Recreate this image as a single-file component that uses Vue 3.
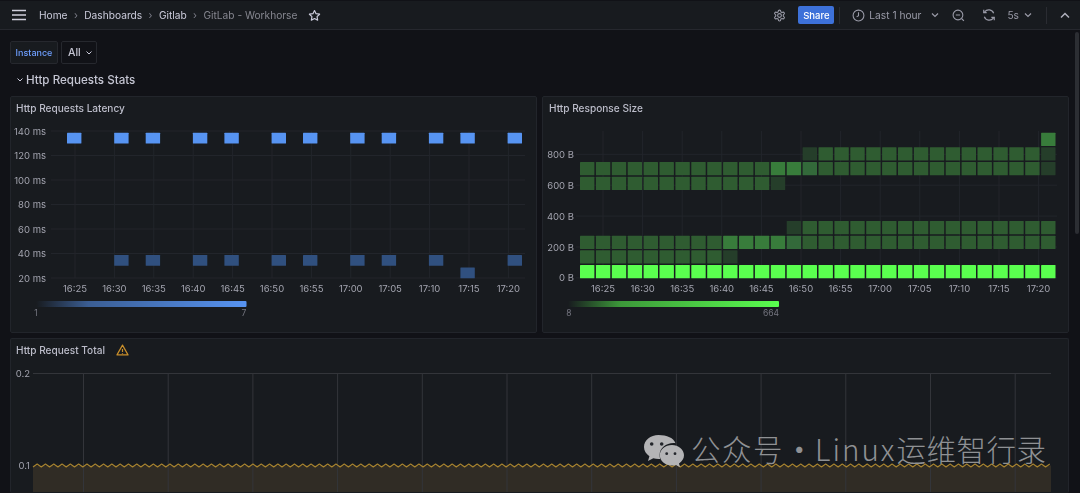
<template>
  <div class="page">
    <header class="topbar">
      <svg class="menu" width="16" height="12" viewBox="0 0 16 12"><path d="M1 1.5h14M1 6h14M1 10.500h14" stroke="#d0d0dc" stroke-width="1.500" fill="none" /></svg>
      <nav class="crumbs">
        <span>Home</span><i>›</i><span>Dashboards</span><i>›</i><span>Gitlab</span><i>›</i><span class="current">GitLab - Workhorse</span>
      </nav>
      <svg class="star" width="13" height="13" viewBox="0 0 24 24"><path d="M12 2.800l2.900 5.900 6.500.9-4.700 4.600 1.100 6.500-5.800-3.100-5.800 3.100 1.100-6.500-4.700-4.600 6.500-.9z" fill="none" stroke="#ccccdc" stroke-width="2.200" stroke-linejoin="round" /></svg>
      <div class="spacer"></div>
      <svg width="13" height="13" viewBox="0 0 24 24" fill="none" stroke="#9a9ba8" stroke-width="2"><path d="M12.220 2h-.44a2 2 0 0 0-2 2v.18a2 2 0 0 1-1 1.730l-.43.25a2 2 0 0 1-2 0l-.15-.08a2 2 0 0 0-2.730.73l-.22.38a2 2 0 0 0 .73 2.730l.15.1a2 2 0 0 1 1 1.720v.51a2 2 0 0 1-1 1.740l-.15.09a2 2 0 0 0-.73 2.730l.22.38a2 2 0 0 0 2.730.73l.15-.08a2 2 0 0 1 2 0l.43.25a2 2 0 0 1 1 1.730V20a2 2 0 0 0 2 2h.44a2 2 0 0 0 2-2v-.18a2 2 0 0 1 1-1.730l.43-.25a2 2 0 0 1 2 0l.15.08a2 2 0 0 0 2.730-.73l.22-.39a2 2 0 0 0-.73-2.730l-.15-.08a2 2 0 0 1-1-1.740v-.5a2 2 0 0 1 1-1.740l.15-.09a2 2 0 0 0 .73-2.730l-.22-.38a2 2 0 0 0-2.730-.73l-.15.08a2 2 0 0 1-2 0l-.43-.25a2 2 0 0 1-1-1.730V4a2 2 0 0 0-2-2z" /><circle cx="12" cy="12" r="3.500" /></svg>
      <button class="share">Share</button>
      <span class="divider"></span>
      <svg class="clock" width="13" height="13" viewBox="0 0 24 24" fill="none" stroke="#9a9ba8" stroke-width="2"><circle cx="12" cy="12" r="10" /><path d="M12 6v6.500l-3.500 2" /></svg>
      <span class="muted range">Last 1 hour</span>
      <svg class="chev first" width="8" height="6" viewBox="0 0 8 6"><path d="M1 1.500l3 3 3-3" fill="none" stroke="#9a9ba8" stroke-width="1.200" /></svg>
      <svg class="zoomout" width="13" height="13" viewBox="0 0 24 24" fill="none" stroke="#9a9ba8" stroke-width="2"><circle cx="11" cy="11" r="9" /><path d="M7 11h8M18 18l4 4" /></svg>
      <svg class="refresh" width="14" height="14" viewBox="0 0 24 24" fill="none" stroke="#9a9ba8" stroke-width="2"><path d="M20 9a9 9 0 0 0-15.500-2.500L3 8M4 15a9 9 0 0 0 15.500 2.500L21 16" /><path d="M3 3v5h5M21 21v-5h-5" /></svg>
      <span class="muted interval">5s</span>
      <svg class="chev" width="8" height="6" viewBox="0 0 8 6"><path d="M1 1.500l3 3 3-3" fill="none" stroke="#9a9ba8" stroke-width="1.200" /></svg>
      <span class="divider second"></span>
      <svg class="up" width="10" height="7" viewBox="0 0 10 7"><path d="M1 5.500l4-4 4 4" fill="none" stroke="#b0b1bd" stroke-width="1.500" /></svg>
    </header>

    <main class="content">
      <div class="vars">
        <label class="var-label">Instance</label>
        <div class="var-value">All
          <svg width="8" height="6" viewBox="0 0 8 6"><path d="M1.500 1.500l2.500 2.500 2.500-2.500" fill="none" stroke="#ccccdc" stroke-width="1" /></svg>
        </div>
      </div>

      <div class="row-title">
        <svg width="8" height="6" viewBox="0 0 8 6"><path d="M1.500 1.500l2.500 2.500 2.500-2.500" fill="none" stroke="#ccccdc" stroke-width="1" /></svg>
        <span>Http Requests Stats</span>
      </div>

      <div class="panels">
        <section class="panel">
          <h3>Http Requests Latency</h3>
          <svg class="chart" viewBox="11 120 525 212" width="525" height="212">
            <defs>
              <linearGradient id="blueLegend"><stop offset="0" stop-color="#5794f2" stop-opacity="0" /><stop offset="0.25" stop-color="#5794f2" stop-opacity="0.55" /><stop offset="1" stop-color="#5794f2" /></linearGradient>
            </defs>
            <g class="grid">
              <line v-for="t in latencyY" :key="t.label" x1="51" x2="525" :y1="t.y" :y2="t.y" />
              <line v-for="t in latencyX" :key="t.label" :x1="t.x" :x2="t.x" y1="131" y2="278" />
            </g>
            <rect v-for="(c, i) in latencyCells" :key="i" :x="c.x" :y="c.y" width="14.400" height="10.800" rx="0.500" :fill="c.fill" />
            <text v-for="t in latencyY" :key="t.label" class="tick" x="46" :y="t.y + 3.500" text-anchor="end">{{ t.label }}</text>
            <text v-for="t in latencyX" :key="t.label" class="tick" :x="t.x" y="292" text-anchor="middle">{{ t.label }}</text>
            <rect x="36" y="301" width="210.500" height="6" rx="1" fill="url(#blueLegend)" />
            <text class="legend" x="36" y="316" text-anchor="middle">1</text>
            <text class="legend" x="244" y="316" text-anchor="middle">7</text>
          </svg>
        </section>

        <section class="panel">
          <h3 class="right-title">Http Response Size</h3>
          <svg class="chart" viewBox="543 120 525 212" width="525" height="212">
            <defs>
              <linearGradient id="greenLegend"><stop offset="0" stop-color="#5aff4f" stop-opacity="0" /><stop offset="0.25" stop-color="#5aff4f" stop-opacity="0.55" /><stop offset="1" stop-color="#5aff4f" /></linearGradient>
            </defs>
            <g class="grid">
              <line v-for="t in sizeY" :key="t.label" x1="576" x2="1057" :y1="t.y" :y2="t.y" />
              <line v-for="t in sizeX" :key="t.label" :x1="t.x" :x2="t.x" y1="131" y2="278" />
            </g>
            <rect v-for="(c, i) in sizeCells" :key="i" :x="c.x" :y="c.y" width="14.400" height="13.300" rx="0.500" :fill="c.fill" />
            <text v-for="t in sizeY" :key="t.label" class="tick" x="574" :y="t.y + 3.500" text-anchor="end">{{ t.label }}</text>
            <text v-for="t in sizeX" :key="t.label" class="tick" :x="t.x" y="292" text-anchor="middle">{{ t.label }}</text>
            <rect x="568" y="301" width="211" height="6" rx="1" fill="url(#greenLegend)" />
            <text class="legend" x="569" y="316" text-anchor="middle">8</text>
            <text class="legend" x="771" y="316" text-anchor="middle">664</text>
          </svg>
        </section>
      </div>

      <section class="panel total">
        <h3>Http Request Total
          <svg width="13" height="12" viewBox="0 0 24 22" fill="none" stroke="#c98f2b" stroke-width="2.200"><path d="M12 2L1.800 20h20.400z" stroke-linejoin="round" /><path d="M12 9v5.500M12 16.500v1.500" /></svg>
        </h3>
        <svg class="chart" viewBox="11 363 1057 130" width="1057" height="130">
          <rect x="33" y="466.500" width="1018" height="27" fill="#302c25" />
          <g class="grid strong">
            <line x1="33" x2="1051" y1="374.500" y2="374.500" />
            <line v-for="x in totalX" :key="x" :x1="x" :x2="x" y1="374.500" y2="493" />
          </g>
          <path :d="wavePath" fill="none" stroke="#a8842f" stroke-width="1.100" stroke-linejoin="round" />
          <text class="tick" x="30" y="378" text-anchor="end">0.2</text>
          <text class="tick" x="30" y="470" text-anchor="end">0.1</text>
        </svg>
      </section>
    </main>

    <div class="watermark">
      <svg width="42" height="34" viewBox="0 0 42 34">
        <path d="M15.500 1C7.500 1 1 6.300 1 13c0 3.800 2.100 7 5.400 9.200L5 27l5.300-2.800c1.700.5 3.400.8 5.200.8.600 0 1.100 0 1.700-.1-.4-1.200-.6-2.500-.6-3.800 0-6.800 6.200-12 14-12 .7 0 1.300 0 1.900.1C30.900 4.100 23.800 1 15.500 1z" fill="#b4b4b6" />
        <path d="M41 21.300c0-5.700-5.700-10.300-12-10.300-6.800 0-12.200 4.600-12.200 10.300S22.200 31.600 29 31.600c1.400 0 2.800-.2 4.100-.6l3.900 2.200-1-3.700c3-2.100 5-4.900 5-8.200z" fill="#b4b4b6" />
        <circle cx="8.700" cy="10" r="1.800" fill="#23262b" /><circle cx="18.700" cy="10" r="1.800" fill="#23262b" />
        <circle cx="23.700" cy="19.700" r="1.400" fill="#23262b" /><circle cx="32" cy="19.700" r="1.400" fill="#23262b" />
      </svg>
      <span class="mark-text"><span class="mark-name">公众号</span><b class="dot">·</b><span class="mark-latin">Linux</span>运维智行录</span>
    </div>
    <div class="scrollbar"></div>
  </div>
</template>

<script setup>
const times = ['16:25', '16:30', '16:35', '16:40', '16:45', '16:50', '16:55', '17:00', '17:05', '17:10', '17:15', '17:20']

const latencyY = ['140 ms', '120 ms', '100 ms', '80 ms', '60 ms', '40 ms', '20 ms'].map((label, i) => ({ label, y: 131 + i * 24.5 }))
const latencyX = times.map((label, i) => ({ label, x: 75 + i * 39.4 }))
const sizeY = ['800 B', '600 B', '400 B', '200 B', '0 B'].map((label, i) => ({ label, y: 154.3 + i * 30.9 }))
const sizeX = times.map((label, i) => ({ label, x: 603 + i * 39.6 }))
const totalX = Array.from({ length: 12 }, (_, i) => 83.5 + i * 84.7)

// latency cells: two samples every ~39px, offset pattern 47/31
const cellX = [67, 114.2, 145.7, 192.9, 224.4, 271.6, 303, 350.2, 381.7, 428.9, 460.4, 507.6]
const latencyCells = []
cellX.forEach((x, i) => {
  latencyCells.push({ x, y: 132.7, fill: '#5794f2' })
  if (i > 0) latencyCells.push({ x, y: i === 10 ? 267.5 : 255, fill: '#30507f' })
})

const MID = '#2f5c31'
const SOFT = '#33693a'
const HI = '#387c3b'
const DIM = '#253e2a'
const FULL = '#5aff4f'
const sizeCells = []
const add = (col, y, fill) => sizeCells.push({ x: 580 + col * 15.9, y, fill })
for (let c = 0; c < 30; c++) {
  add(c, 265, FULL)
  if (c <= 8) add(c, 250.3, MID)
  if (c === 9) add(c, 250.3, DIM)
  if (c >= 9 && c <= 12) add(c, 235.7, HI)
  else if (c === 13) add(c, 235.7, SOFT)
  else add(c, 235.7, MID)
  if (c === 13) add(c, 221, DIM)
  if (c >= 14) add(c, 221, MID)
  if (c <= 11) add(c, 176.7, MID)
  if (c === 12) add(c, 176.7, DIM)
  if (c === 12 || c === 13) add(c, 162, HI)
  else if (c === 14) add(c, 162, SOFT)
  else if (c === 29) add(c, 162, DIM)
  else add(c, 162, MID)
  if (c === 14 || c === 29) add(c, 147.3, DIM)
  else if (c > 14) add(c, 147.3, MID)
}
add(29, 132.7, HI)

// flat-line series with tiny jitter, drawn as a zigzag
let wave = 'M33 468'
for (let i = 1; 33 + i * 4.15 < 1051; i++) {
  wave += `L${(33 + i * 4.15).toFixed(2)} ${i % 2 ? 465 : 468}`
}
const wavePath = wave
</script>

<style>
html, body { margin: 0; background: #111217; overflow: hidden; }
</style>

<style scoped>
.page {
  position: relative;
  width: 1080px;
  height: 493px;
  overflow: hidden;
  background: #111217;
  color: #ccccdc;
  font-family: Inter, "Noto Sans", sans-serif;
  font-size: 11px;
}
.topbar, .content { filter: blur(0.3px); }
.topbar {
  display: flex;
  align-items: center;
  height: 28px;
  padding: 0 10px 0 11px;
  background: #181b1f;
  border-top: 1px solid #111217;
  border-bottom: 1px solid #26282e;
  box-sizing: content-box;
}
.crumbs {
  display: flex;
  align-items: center;
  margin-left: 12px;
  font-size: 10.2px;
}
.crumbs i { margin: 0 6.400px; font-style: normal; color: #7b7c87; }
.crumbs .current { color: #85868f; }
.star { margin-left: 11px; }
.spacer { flex: 1; }
.share {
  margin-left: 12px;
  width: 36px;
  height: 18px;
  padding: 0;
  border: 0;
  border-radius: 2px;
  background: #3d71d9;
  color: #fff;
  font: 500 9.5px Inter, sans-serif;
}
.divider { width: 1px; height: 17px; margin-left: 5px; background: #2a2c32; }
.divider.second { margin-left: 14px; }
.clock { margin-left: 12px; }
.muted { color: #9a9ba8; font-size: 10.2px; }
.range { margin-left: 4px; }
.chev { margin-left: 5px; }
.chev.first { margin-left: 10px; }
.zoomout { margin-left: 13px; }
.refresh { margin-left: 17px; }
.interval { margin-left: 11px; }
.up { margin-left: 13px; }
.content { padding: 11px 11px 0 10px; }
.vars { display: flex; gap: 3px; height: 23px; }
.var-label, .var-value {
  display: flex;
  align-items: center;
  box-sizing: border-box;
  height: 23px;
  border: 1px solid #26282e;
  border-radius: 2px;
}
.var-label {
  width: 48px;
  justify-content: center;
  background: #181b1f;
  color: #6e9fff;
  font-size: 9px;
  font-weight: 500;
}
.var-value { width: 36px; padding-left: 6px; gap: 4px; font-size: 10.5px; font-weight: 500; color: #c6c6d4; }
.row-title {
  display: flex;
  align-items: center;
  gap: 2px;
  height: 32px;
  padding-left: 6px;
  font-size: 11.6px;
  font-weight: 500;
  color: #c4c5d2;
}
.panels { display: grid; grid-template-columns: 1fr 1fr; gap: 5px; }
.panel {
  background: #181b1f;
  border: 1px solid #22252b;
  border-radius: 2px;
  box-sizing: border-box;
  height: 237px;
}
.panel h3 {
  display: flex;
  align-items: center;
  gap: 11px;
  box-sizing: border-box;
  height: 23px;
  margin: 0;
  padding: 0 0 2px 5px;
  font-size: 10.1px;
  font-weight: 500;
  color: #bcbdca;
}
.panel .right-title { padding-left: 6px; }
.chart { display: block; }
.total { height: 155px; margin-top: 5px; border-bottom: 0; }
.grid line { stroke: #22252b; stroke-width: 1; }
.grid.strong line { stroke: #33353a; }
.tick { fill: #a3a4af; font-size: 9.5px; }
.legend { fill: #757680; font-size: 8.5px; }
.watermark {
  position: absolute;
  left: 643px;
  top: 431px;
  display: flex;
  align-items: center;
  gap: 6px;
  color: #8f9194;
  font-family: "Noto Sans CJK SC", sans-serif;
  font-size: 29.5px;
  font-weight: 300;
  line-height: 34px;
  letter-spacing: 0.5px;
  white-space: nowrap;
}
.mark-text { margin-bottom: 5px; }
.mark-name { letter-spacing: 1.500px; }
.mark-latin { letter-spacing: 2px; }
.dot { margin: 0 0.500px; font-weight: 400; }
.scrollbar {
  position: absolute;
  right: 1px;
  top: 32px;
  width: 4px;
  height: 202px;
  border-radius: 2px;
  background: #2c2e33;
}
</style>
